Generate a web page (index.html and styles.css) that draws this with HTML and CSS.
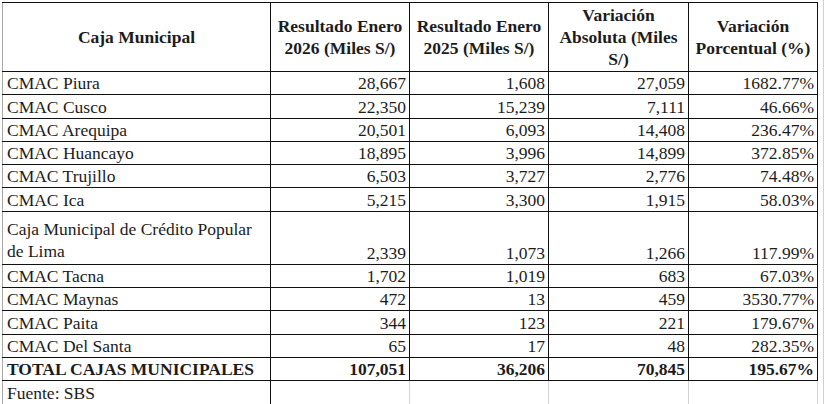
FILE: index.html
```html
<!DOCTYPE html>
<html lang="es">
<head>
<meta charset="utf-8">
<title>Cajas Municipales</title>
<link rel="stylesheet" href="styles.css">
</head>
<body>
<div class="sheet">
<table class="grid">
  <colgroup>
    <col class="c1"><col class="c2"><col class="c3"><col class="c4"><col class="c5">
  </colgroup>
  <thead>
    <tr class="head">
      <th>Caja Municipal</th>
      <th>Resultado Enero 2026 (Miles S/)</th>
      <th>Resultado Enero 2025 (Miles S/)</th>
      <th>Variación Absoluta (Miles S/)</th>
      <th>Variación Porcentual (%)</th>
    </tr>
  </thead>
  <tbody>
    <tr><td>CMAC Piura</td><td class="n">28,667</td><td class="n">1,608</td><td class="n">27,059</td><td class="n">1682.77%</td></tr>
    <tr><td>CMAC Cusco</td><td class="n">22,350</td><td class="n">15,239</td><td class="n">7,111</td><td class="n">46.66%</td></tr>
    <tr><td>CMAC Arequipa</td><td class="n">20,501</td><td class="n">6,093</td><td class="n">14,408</td><td class="n">236.47%</td></tr>
    <tr><td>CMAC Huancayo</td><td class="n">18,895</td><td class="n">3,996</td><td class="n">14,899</td><td class="n">372.85%</td></tr>
    <tr><td>CMAC Trujillo</td><td class="n">6,503</td><td class="n">3,727</td><td class="n">2,776</td><td class="n">74.48%</td></tr>
    <tr><td>CMAC Ica</td><td class="n">5,215</td><td class="n">3,300</td><td class="n">1,915</td><td class="n">58.03%</td></tr>
    <tr class="tall"><td class="wrap">Caja Municipal de Crédito Popular de Lima</td><td class="n">2,339</td><td class="n">1,073</td><td class="n">1,266</td><td class="n">117.99%</td></tr>
    <tr><td>CMAC Tacna</td><td class="n">1,702</td><td class="n">1,019</td><td class="n">683</td><td class="n">67.03%</td></tr>
    <tr><td>CMAC Maynas</td><td class="n">472</td><td class="n">13</td><td class="n">459</td><td class="n">3530.77%</td></tr>
    <tr><td>CMAC Paita</td><td class="n">344</td><td class="n">123</td><td class="n">221</td><td class="n">179.67%</td></tr>
    <tr><td>CMAC Del Santa</td><td class="n">65</td><td class="n">17</td><td class="n">48</td><td class="n">282.35%</td></tr>
    <tr class="total"><td>TOTAL CAJAS MUNICIPALES</td><td class="n">107,051</td><td class="n">36,206</td><td class="n">70,845</td><td class="n">195.67%</td></tr>
    <tr class="foot"><td>Fuente: SBS</td><td></td><td></td><td></td><td></td></tr>
  </tbody>
</table>
</div>
</body>
</html>
```
FILE: styles.css
```css
html, body {
  margin: 0;
  padding: 0;
  background: #ffffff;
}

.sheet {
  padding: 2px 0 0 2px;
  border-right: 1px solid #d0d0d0;
  width: 821px;
  height: 402px;
  overflow: hidden;
}

.grid {
  border-collapse: collapse;
  table-layout: fixed;
  width: 816px;
  font-family: "Times New Roman", Times, "Liberation Serif", Tinos, "Noto Serif", "DejaVu Serif", FreeSerif, serif;
  font-size: 17.5px;
  color: #1c1c1c;
}

.c1 { width: 268px; }
.c2 { width: 139px; }
.c3 { width: 139px; }
.c4 { width: 140px; }
.c5 { width: 129px; }

.grid th,
.grid td {
  border: 1px solid #111111;
  padding: 0 3px 0 4px;
  line-height: 22px;
  height: 22.3px;
  white-space: nowrap;
  overflow: hidden;
}

.grid th {
  height: 68px;
  font-weight: bold;
  text-align: center;
  vertical-align: middle;
  white-space: normal;
  padding: 0 2px;
}

.grid td {
  vertical-align: bottom;
}

.grid tr > :first-child {
  border-left-color: #a8a8a8;
}

.grid td.n {
  text-align: right;
  padding-right: 3px;
}

.grid td.wrap {
  white-space: normal;
  line-height: 22px;
  padding-bottom: 2px;
}

.grid tr.tall td {
  height: 50px;
}

.grid tr.total td {
  font-weight: bold;
}

.grid tr.foot td {
  border-top-color: #111111;
  border-bottom: none;
  border-left-color: #d4d4d4;
  border-right-color: #d4d4d4;
  height: 23px;
}

.grid tr.foot td:first-child {
  border-left-color: #a8a8a8;
  border-right-color: #111111;
}
```
